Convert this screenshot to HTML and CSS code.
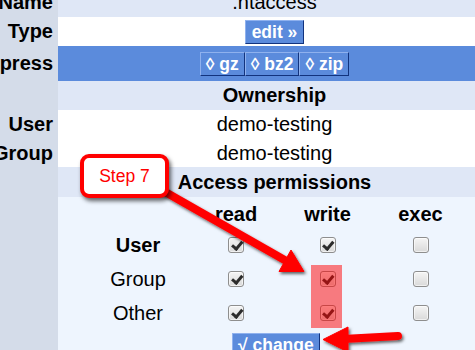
FILE: index.html
```html
<!DOCTYPE html>
<html>
<head>
<meta charset="utf-8">
<link rel="stylesheet" href="styles.css">
</head>
<body>
<div class="sheet">
  <div class="lbl">Name</div><div class="val tint">.htaccess</div>
  <div class="lbl">Type</div><div class="val"><button class="btn btn-wide">edit »</button></div>
  <div class="lbl">Compress</div>
  <div class="val blue">
    <span class="btn-group"><button class="btn">◊ gz</button><button class="btn">◊ bz2</button><button class="btn">◊ zip</button></span>
  </div>
  <div class="lbl"></div><div class="val tint head">Ownership</div>
  <div class="lbl">User</div><div class="val">demo-testing</div>
  <div class="lbl">Group</div><div class="val">demo-testing</div>
  <div class="lbl"></div><div class="val tint head">Access permissions</div>
  <div class="lbl"></div>
  <div class="perms">
    <div class="perm-grid">
      <div class="pl"></div><div class="ph">read</div><div class="ph">write</div><div class="ph">exec</div>
      <div class="pl strong">User</div><div class="pc"><span class="cb on"></span></div><div class="pc"><span class="cb on"></span></div><div class="pc"><span class="cb"></span></div>
      <div class="pl">Group</div><div class="pc"><span class="cb on"></span></div><div class="pc"><span class="cb on"></span></div><div class="pc"><span class="cb"></span></div>
      <div class="pl">Other</div><div class="pc"><span class="cb on"></span></div><div class="pc"><span class="cb on"></span></div><div class="pc"><span class="cb"></span></div>
    </div>
    <button class="btn change">√ change</button>
  </div>
</div>

<div class="hilite"></div>
<svg class="arrows" width="475" height="350" viewBox="0 0 475 350">
  <defs>
    <filter id="sh" x="-20%" y="-20%" width="140%" height="140%">
      <feDropShadow dx="1.5" dy="2" stdDeviation="1.5" flood-color="#000" flood-opacity="0.6"/>
    </filter>
  </defs>
  <g filter="url(#sh)" fill="#ff0000" stroke="#ff0000">
    <line x1="160" y1="189" x2="289" y2="262.5" stroke-width="8"/>
    <polygon points="304,271.5 279,271.5 291,250" stroke-width="1" stroke-linejoin="round"/>
    <line x1="343" y1="339" x2="398" y2="336" stroke-width="8" stroke-linecap="round"/>
    <polygon points="323,339.5 348,327 348,352" stroke-width="1" stroke-linejoin="round"/>
  </g>
</svg>
<div class="callout">Step 7</div>
</body>
</html>
```

FILE: styles.css
```css
html, body {
  margin: 0;
  padding: 0;
  width: 475px;
  height: 350px;
  overflow: hidden;
  background: #eef5fe;
  font-family: "Liberation Sans", Arial, sans-serif;
  color: #000;
}

.sheet {
  display: grid;
  grid-template-columns: 58px 433px;
  grid-template-rows: 30px 29px 35px 29px 29px 28px 30px auto;
  margin-top: -13px;
  width: 491px;
}

.lbl {
  background: #d4dce9;
  display: flex;
  justify-content: flex-end;
  align-items: center;
  padding-right: 5px;
  font-weight: bold;
  font-size: 20px;
  line-height: 23px;
  white-space: nowrap;
}

.val {
  background: #ffffff;
  display: flex;
  justify-content: center;
  align-items: center;
  font-size: 20px;
  line-height: 23px;
  white-space: nowrap;
}

.tint { background: #dfe7f6; }
.blue { background: #5b8bdc; }
.head { font-weight: bold; }

.btn {
  font-family: "Liberation Sans", Arial, sans-serif;
  font-weight: bold;
  font-size: 17.5px;
  line-height: 20px;
  color: #ffffff;
  background: #5b8bdc;
  border: 1px solid;
  border-color: #8fb1ee #12337e #12337e #8fb1ee;
  padding: 1px 5px;
  margin: 0;
  border-radius: 0;
  cursor: pointer;
}

.btn-wide { padding: 1px 6px; }

.btn-group { display: inline-flex; }

.perms {
  background: #eef5fe;
  padding-bottom: 20px;
}

.perm-grid {
  display: grid;
  grid-template-columns: 132px 92px 91px 95px;
  grid-template-rows: 31px 34px 34px 34px;
  font-size: 20px;
  line-height: 23px;
}

.ph {
  font-weight: bold;
  text-align: center;
  padding-top: 6px;
}

.pl {
  display: flex;
  align-items: center;
  justify-content: center;
  padding-left: 28px;
}

.pl.strong { font-weight: bold; }

.pc {
  display: flex;
  align-items: center;
  justify-content: center;
}

.cb {
  width: 14px;
  height: 14px;
  border: 1px solid #8e8e8e;
  border-radius: 3px;
  background: linear-gradient(#f5f5f5, #d9d9d9);
  box-shadow: inset 0 0 0 1px rgba(255,255,255,0.6);
  display: inline-block;
  position: relative;
}

.cb.on::after {
  content: "";
  position: absolute;
  left: 4.5px;
  top: 1px;
  width: 3.5px;
  height: 7.5px;
  border: solid #2b2b2b;
  border-width: 0 3px 3px 0;
  transform: rotate(40deg);
}

.change {
  margin: 3px 0 0 174px;
}

.hilite {
  position: absolute;
  left: 311px;
  top: 265px;
  width: 31px;
  height: 63px;
  background: rgba(255, 0, 0, 0.5);
}

.arrows {
  position: absolute;
  left: 0;
  top: 0;
}

.callout {
  position: absolute;
  left: 80px;
  top: 154px;
  width: 81px;
  height: 36px;
  border: 4px solid #ff0000;
  border-radius: 9px;
  background: #ffffff;
  box-shadow: 2px 3px 4px rgba(0,0,0,0.6);
  color: #ff0000;
  font-size: 17.5px;
  line-height: 36px;
  text-align: center;
}
```
